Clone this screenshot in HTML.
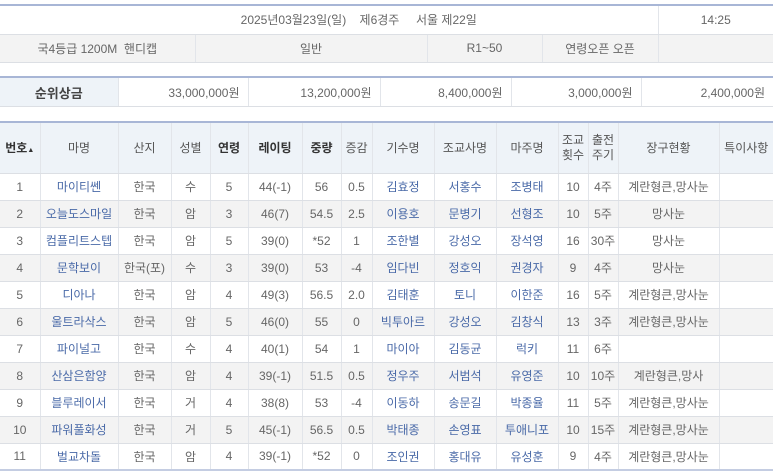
<!DOCTYPE html>
<html><head><meta charset="utf-8"><style>
*{margin:0;padding:0;box-sizing:border-box}
body{width:773px;height:473px;background:#fff;font-family:"Liberation Sans","Noto Sans CJK KR",sans-serif;font-size:12px;color:#666;position:relative;overflow:hidden}
table{position:absolute;left:0;width:773px;border-collapse:collapse;table-layout:fixed}
td,th{text-align:center;border-bottom:1px solid #dcdfe4;border-left:1px solid #e2e5ea;white-space:nowrap;overflow:hidden;font-weight:normal}
td:first-child,th:first-child{border-left:none}
.top{border-top:2px solid #a8b6d6}
.bot{border-bottom:2px solid #c4cde2}
a{color:#4a6aa8;text-decoration:none}
.b{font-weight:bold;color:#333}
th{background:#eef3f8;color:#555;font-size:12px}
tbody tr:nth-child(even) td{background:#f3f3f3}
.r{text-align:right;padding-right:8px}
</style></head><body>
<table class="top" style="top:4px;height:57px">
<colgroup><col style="width:195px"><col style="width:232px"><col style="width:115px"><col style="width:116px"><col style="width:115px"></colgroup>
<tr style="height:29px"><td colspan="4" style="border-left:none;padding-left:60px">2025년03월23일(일) &nbsp; &nbsp;제6경주 &nbsp; &nbsp; 서울 제22일</td><td>14:25</td></tr>
<tr style="height:28px"><td>국4등급 1200M &nbsp;핸디캡</td><td>일반</td><td>R1~50</td><td>연령오픈 오픈</td><td></td></tr>
</table>
<table class="top" style="top:76px;height:31px">
<colgroup><col style="width:118px"><col style="width:130px"><col style="width:132px"><col style="width:131px"><col style="width:130px"><col style="width:132px"></colgroup>
<tr><td style="background:#eef3f8;font-weight:bold;color:#444;font-size:13px">순위상금</td><td class="r">33,000,000원</td><td class="r">13,200,000원</td><td class="r">8,400,000원</td><td class="r">3,000,000원</td><td class="r">2,400,000원</td></tr>
</table>
<table class="top" style="top:121px">
<colgroup><col style="width:40px"><col style="width:78px"><col style="width:53px"><col style="width:39px"><col style="width:38px"><col style="width:54px"><col style="width:39px"><col style="width:31px"><col style="width:62px"><col style="width:62px"><col style="width:62px"><col style="width:30px"><col style="width:30px"><col style="width:101px"><col style="width:54px"></colgroup>
<thead><tr style="height:51px"><th class="b">번호<span style="font-size:7px">▲</span></th><th>마명</th><th>산지</th><th>성별</th><th class="b">연령</th><th class="b">레이팅</th><th class="b">중량</th><th>증감</th><th>기수명</th><th>조교사명</th><th>마주명</th><th style="line-height:15px">조교<br>횟수</th><th style="line-height:15px">출전<br>주기</th><th>장구현황</th><th>특이사항</th></tr></thead>
<tbody>
<tr style="height:27px"><td>1</td><td><a>마이티쎈</a></td><td>한국</td><td>수</td><td>5</td><td>44(-1)</td><td>56</td><td>0.5</td><td><a>김효정</a></td><td><a>서홍수</a></td><td><a>조병태</a></td><td>10</td><td>4주</td><td>계란형큰,망사눈</td><td></td></tr>
<tr style="height:27px"><td>2</td><td><a>오늘도스마일</a></td><td>한국</td><td>암</td><td>3</td><td>46(7)</td><td>54.5</td><td>2.5</td><td><a>이용호</a></td><td><a>문병기</a></td><td><a>선형조</a></td><td>10</td><td>5주</td><td>망사눈</td><td></td></tr>
<tr style="height:27px"><td>3</td><td><a>컴플리트스텝</a></td><td>한국</td><td>암</td><td>5</td><td>39(0)</td><td>*52</td><td>1</td><td><a>조한별</a></td><td><a>강성오</a></td><td><a>장석영</a></td><td>16</td><td>30주</td><td>망사눈</td><td></td></tr>
<tr style="height:27px"><td>4</td><td><a>문학보이</a></td><td>한국(포)</td><td>수</td><td>3</td><td>39(0)</td><td>53</td><td>-4</td><td><a>임다빈</a></td><td><a>정호익</a></td><td><a>권경자</a></td><td>9</td><td>4주</td><td>망사눈</td><td></td></tr>
<tr style="height:27px"><td>5</td><td><a>디아나</a></td><td>한국</td><td>암</td><td>4</td><td>49(3)</td><td>56.5</td><td>2.0</td><td><a>김태훈</a></td><td><a>토니</a></td><td><a>이한준</a></td><td>16</td><td>5주</td><td>계란형큰,망사눈</td><td></td></tr>
<tr style="height:27px"><td>6</td><td><a>울트라삭스</a></td><td>한국</td><td>암</td><td>5</td><td>46(0)</td><td>55</td><td>0</td><td><a>빅투아르</a></td><td><a>강성오</a></td><td><a>김창식</a></td><td>13</td><td>3주</td><td>계란형큰,망사눈</td><td></td></tr>
<tr style="height:27px"><td>7</td><td><a>파이널고</a></td><td>한국</td><td>수</td><td>4</td><td>40(1)</td><td>54</td><td>1</td><td><a>마이아</a></td><td><a>김동균</a></td><td><a>럭키</a></td><td>11</td><td>6주</td><td></td><td></td></tr>
<tr style="height:27px"><td>8</td><td><a>산삼은함양</a></td><td>한국</td><td>암</td><td>4</td><td>39(-1)</td><td>51.5</td><td>0.5</td><td><a>정우주</a></td><td><a>서범석</a></td><td><a>유영준</a></td><td>10</td><td>10주</td><td>계란형큰,망사</td><td></td></tr>
<tr style="height:27px"><td>9</td><td><a>블루레이서</a></td><td>한국</td><td>거</td><td>4</td><td>38(8)</td><td>53</td><td>-4</td><td><a>이동하</a></td><td><a>송문길</a></td><td><a>박종율</a></td><td>11</td><td>5주</td><td>계란형큰,망사눈</td><td></td></tr>
<tr style="height:27px"><td>10</td><td><a>파워풀화성</a></td><td>한국</td><td>거</td><td>5</td><td>45(-1)</td><td>56.5</td><td>0.5</td><td><a>박태종</a></td><td><a>손영표</a></td><td><a>투애니포</a></td><td>10</td><td>15주</td><td>계란형큰,망사눈</td><td></td></tr>
<tr style="height:27px"><td class="bot">11</td><td class="bot"><a>벌교차돌</a></td><td class="bot">한국</td><td class="bot">암</td><td class="bot">4</td><td class="bot">39(-1)</td><td class="bot">*52</td><td class="bot">0</td><td class="bot"><a>조인권</a></td><td class="bot"><a>홍대유</a></td><td class="bot"><a>유성훈</a></td><td class="bot">9</td><td class="bot">4주</td><td class="bot">계란형큰,망사눈</td><td class="bot"></td></tr>
</tbody></table>
</body></html>
